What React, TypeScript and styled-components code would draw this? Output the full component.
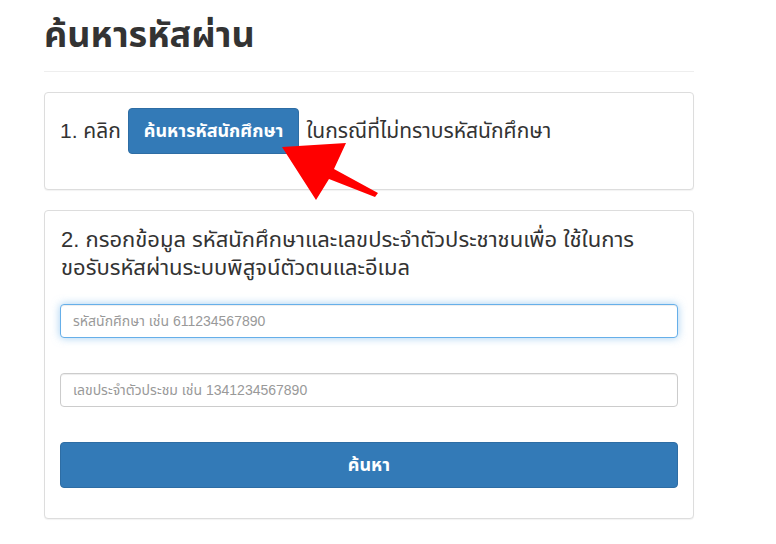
import React from "react";
import styled, { createGlobalStyle } from "styled-components";

const Global = createGlobalStyle`
  html, body { margin: 0; padding: 0; background: #fff; }
  body {
    font-family: "Helvetica Neue", "Liberation Sans", "Noto Sans Thai", "Noto Sans", sans-serif;
    color: #333;
  }
  * { box-sizing: border-box; }
`;

const Page = styled.div`
  width: 650px;
  margin-left: 44px;
  padding-top: 15px;
`;

const Title = styled.h1`
  margin: 0;
  font-size: 36px;
  line-height: 40px;
  font-weight: 700;
  color: #333;
`;

const Rule = styled.hr`
  margin: 16px 0 20px;
  border: 0;
  border-top: 1px solid #eee;
`;

const Panel = styled.div`
  border: 1px solid #ddd;
  border-radius: 4px;
  background: #fff;
  box-shadow: 0 1px 1px rgba(0, 0, 0, 0.05);
  padding: 15px;
  margin-bottom: 20px;
  position: relative;
`;

const StepRow = styled.div`
  display: flex;
  align-items: center;
  gap: 7px;
  font-size: 21px;
  line-height: 28px;
  margin-bottom: 20px;
`;

const SmallButton = styled.button`
  background: #337ab7;
  border: 1px solid #2e6da4;
  border-radius: 4px;
  color: #fff;
  font-family: inherit;
  font-size: 18px;
  font-weight: 700;
  height: 46px;
  padding: 0 15px;
`;

const Heading = styled.h4`
  margin: 0 0 22px;
  font-size: 22px;
  line-height: 28px;
  font-weight: 400;
  padding-left: 1px;
`;

const Field = styled.input<{ $focused?: boolean }>`
  display: block;
  width: 100%;
  height: 34px;
  padding: 6px 12px;
  font-family: inherit;
  font-size: 14px;
  color: #555;
  border: 1px solid ${(p) => (p.$focused ? "#66afe9" : "#ccc")};
  border-radius: 4px;
  box-shadow: ${(p) =>
    p.$focused
      ? "inset 0 1px 1px rgba(0,0,0,.075), 0 0 8px rgba(102,175,233,.6)"
      : "inset 0 1px 1px rgba(0,0,0,.075)"};
  margin-bottom: 35px;
  outline: none;
  &::placeholder { color: #999; }
`;

const WideButton = styled.button`
  display: block;
  width: 100%;
  height: 46px;
  background: #337ab7;
  border: 1px solid #2e6da4;
  border-radius: 4px;
  color: #fff;
  font-family: inherit;
  font-size: 18px;
  font-weight: 700;
  margin-bottom: 15px;
`;

const Arrow = styled.svg`
  position: absolute;
  left: 230px;
  top: 40px;
  width: 110px;
  height: 70px;
  overflow: visible;
  pointer-events: none;
`;

export default function App() {
  return (
    <>
      <Global />
      <Page>
        <Title>ค้นหารหัสผ่าน</Title>
        <Rule />
        <Panel>
          <StepRow>
            <span>1. คลิก</span>
            <SmallButton>ค้นหารหัสนักศึกษา</SmallButton>
            <span>ในกรณีที่ไม่ทราบรหัสนักศึกษา</span>
          </StepRow>
          <Arrow viewBox="230 40 110 70">
            <polygon
              points="237,54 301,50 289,76 333,100 330,104 284,86 271,107"
              fill="#ff0000"
            />
          </Arrow>
        </Panel>
        <Panel>
          <Heading>
            2. กรอกข้อมูล รหัสนักศึกษาและเลขประจำตัวประชาชนเพื่อ ใช้ในการ
            <br />
            ขอรับรหัสผ่านระบบพิสูจน์ตัวตนและอีเมล
          </Heading>
          <Field $focused placeholder="รหัสนักศึกษา เช่น 611234567890" />
          <Field placeholder="เลขประจำตัวประชม เช่น 1341234567890" />
          <WideButton>ค้นหา</WideButton>
        </Panel>
      </Page>
    </>
  );
}
